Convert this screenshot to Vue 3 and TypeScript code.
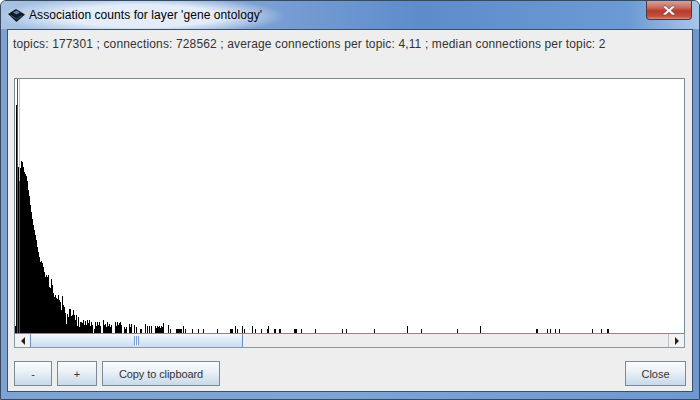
<script setup lang="ts">
const tops: [number, number][] = [
  [15, 326], [16, 105], [18, 167], [20, 168], [21, 161], [22, 162], [23, 167], [24, 172], [25, 174], [26, 176], [27, 181], [28, 190], [29, 196],
  [30, 205], [31, 212], [32, 219], [33, 225], [34, 230], [35, 235], [36, 240], [37, 247], [38, 252], [39, 257], [40, 262], [41, 261],
  [42, 263], [43, 267], [44, 272], [45, 277], [46, 275], [47, 277], [48, 275], [49, 287], [50, 288], [51, 279], [52, 285], [53, 293],
  [54, 297], [55, 295], [56, 298], [57, 299], [58, 295], [59, 300], [60, 302], [61, 310], [62, 296], [63, 305], [64, 307], [65, 313],
  [66, 324], [67, 314], [68, 317], [69, 309], [70, 309], [71, 316], [72, 315], [73, 310], [74, 315], [75, 320], [76, 315], [77, 326],
  [78, 317], [79, 327], [80, 322], [81, 322], [82, 323], [83, 320], [84, 325],
  [85, 321], [86, 325], [87, 320], [88, 323], [89, 320], [90, 326], [91, 322], [92, 325], [94, 329],
  [95, 322], [96, 326], [97, 322], [98, 325], [99, 322], [100, 326], [103, 320], [104, 325], [105, 324], [106, 327], [107, 322],
  [108, 326], [109, 324], [110, 327], [111, 325], [115, 322], [116, 326], [117, 322], [118, 325], [119, 323], [120, 322], [121, 325],
  [124, 327], [125, 329], [126, 327], [129, 324], [130, 327], [131, 324], [134, 325], [136, 327], [140, 329], [141, 329], [145, 324],
  [147, 326], [149, 326], [151, 326], [155, 326], [156, 328], [157, 326], [158, 327], [159, 326], [160, 328], [161, 326],
  [162, 327], [163, 323], [168, 325], [170, 329], [176, 329], [177, 329], [178, 329], [179, 329], [180, 329], [181, 329], [183, 326],
  [185, 329], [192, 329], [198, 329], [203, 329], [217, 329], [230, 329], [231, 329], [232, 329], [235, 326], [237, 329], [242, 326],
  [244, 329], [252, 326], [255, 329], [261, 329], [267, 329], [268, 326], [274, 329], [275, 329], [279, 329], [280, 329], [294, 329],
  [295, 329], [296, 329], [301, 329], [315, 329], [342, 329], [346, 329], [374, 329], [407, 326], [421, 329], [457, 329], [480, 326],
  [536, 329], [537, 329], [547, 329], [550, 329], [555, 329], [559, 329], [592, 329], [601, 329], [607, 329], [608, 329]
]
const bars = tops.map(([x, top]) => ({ x: x - 15, y: top - 79, h: 333 - top }))
</script>

<template>
  <div class="window">
    <header class="titlebar">
      <svg class="app-icon" width="17" height="13" viewBox="0 0 17 13">
        <path d="M0 5 8 0l9 5.500L8.500 13z" fill="#0f1a28" />
        <path d="M5 3.500 8.500 1.500 12 3.500 8.500 5.500z" fill="#5f7f9f" />
        <path d="M3 6.500 8.500 10 14 6.500" fill="none" stroke="#3f5a78" />
      </svg>
      <span class="title">Association counts for layer 'gene ontology'</span>
      <span class="close-x" aria-hidden="true">
        <svg width="16" height="11" viewBox="0 0 16 11">
          <path d="M2 1h3l3 3 3-3h3v1l-4 3.500 4 3.500v1h-3l-3-3-3 3H2V9l4-3.500L2 2z" fill="#f1f1f1" stroke="#6b3a36" stroke-width=".5" />
        </svg>
      </span>
    </header>
    <main class="panel">
      <p class="stats">topics: 177301 ; connections: 728562 ; average connections per topic: 4,11 ; median connections per topic: 2</p>
      <div class="chart">
        <svg class="plot" width="669" height="254" viewBox="0 0 669 254" shape-rendering="crispEdges">
          <rect x="2" y="0" width="1" height="254" fill="#0e6f74" />
          <rect x="4" y="0" width="1" height="102" fill="#86ee8e" />
          <rect x="4" y="102" width="1" height="152" fill="#0f7a25" />
          <rect v-for="b in bars" :key="b.x" :x="b.x" :y="b.y" width="1" :height="b.h" fill="#000" />
        </svg>
        <div class="scrollbar">
          <span class="arrow-btn"><i class="arrow left"></i></span>
          <div class="track">
            <div class="thumb"><span class="grip"></span></div>
          </div>
          <span class="arrow-btn end"><i class="arrow right"></i></span>
        </div>
      </div>
      <footer class="actions">
        <button class="btn small">-</button>
        <button class="btn small plus">+</button>
        <button class="btn copy">Copy to clipboard</button>
        <button class="btn close">Close</button>
      </footer>
    </main>
  </div>
</template>

<style>
html, body { margin: 0; padding: 0; }
</style>

<style scoped>
.window {
  box-sizing: border-box;
  width: 700px;
  height: 400px;
  display: flex;
  flex-direction: column;
  padding: 0 6px 7px;
  border: 1px solid #3a4a5e;
  border-radius: 6px 6px 0 0;
  background: linear-gradient(90deg, #7ea3d2 0%, #7fa5d6 45%, #6e98cf 100%);
  font-family: "Liberation Sans", Arial, sans-serif;
  overflow: hidden;
  position: relative;
}
.titlebar {
  height: 28px;
  flex: none;
  display: flex;
  align-items: center;
  margin: 0 -6px;
  padding-left: 7px;
  background:
    radial-gradient(ellipse 145px 20px at 140px 15px, rgba(232, 240, 250, .95) 55%, rgba(232, 240, 250, 0) 100%),
    linear-gradient(90deg, #a8c2e2 0%, #5e8ccb 60%, #6c9ad4 90%, #a9c6ea 100%);
}
.app-icon { flex: none; margin-right: 4px; }
.title { font-size: 12px; letter-spacing: .07px; color: #000; }
.close-x {
  position: absolute;
  top: 0;
  right: 7px;
  width: 46px;
  height: 19px;
  box-sizing: border-box;
  border: 1px solid #4d3a3f;
  border-top: 0;
  border-radius: 0 0 4px 4px;
  background: linear-gradient(#d9a097 0%, #c96f63 35%, #b93a2c 55%, #c44f3e 85%, #d58b7d 100%);
  display: flex;
  align-items: center;
  justify-content: center;
}
.panel {
  flex: 1;
  min-height: 0;
  box-sizing: border-box;
  display: flex;
  flex-direction: column;
  background: #eeeeee;
  border: 1px solid #3d5068;
  padding: 0 6px 5px 6px;
  color: #333;
}
.stats {
  margin: 0 0 0 -1px;
  height: 48px;
  padding-top: 7px;
  box-sizing: border-box;
  font-size: 12px;
  line-height: 15px;
  letter-spacing: .14px;
  white-space: nowrap;
  color: #333;
}
.chart { display: flex; flex-direction: column; width: 671px; flex: none; }
.plot {
  display: block;
  background: #fff;
  border: 1px solid #7a8a99;
  border-bottom: 0;
}
.scrollbar {
  height: 15px;
  display: flex;
  background: #eeeeee;
  border: 1px solid #8a99a8;
  border-top: 1px solid #6d8cc4;
  box-sizing: border-box;
}
.arrow-btn {
  width: 15px;
  flex: none;
  display: flex;
  align-items: center;
  justify-content: center;
  background: #f2f2f2;
}
.arrow-btn.end { border-left: 1px solid #b8c2cc; }
.arrow { width: 0; height: 0; border-top: 4px solid transparent; border-bottom: 4px solid transparent; }
.arrow.left { border-right: 4px solid #222; }
.arrow.right { border-left: 4px solid #222; }
.track { flex: 1; display: flex; }
.thumb {
  width: 213px;
  box-sizing: border-box;
  border-left: 1px solid #6d8cc4;
  border-right: 1px solid #6d8cc4;
  background: linear-gradient(#f3f8fd, #c9dcf0);
  display: flex;
  align-items: center;
  justify-content: center;
}
.grip {
  width: 5px;
  height: 9px;
  background: repeating-linear-gradient(90deg, #7b9fd0 0 1px, #eef4fa 1px 2px);
}
.actions {
  margin-top: 13px;
  width: 672px;
  display: flex;
  gap: 5px;
}
.btn {
  height: 25px;
  box-sizing: border-box;
  border: 1px solid #7a8a99;
  background: linear-gradient(#fafcfe 0%, #eef3f8 35%, #c8d9ea 100%);
  font-family: "Liberation Sans", Arial, sans-serif;
  font-size: 11px;
  color: #333;
  padding: 0;
}
.small { width: 38px; }
.plus { width: 40px; }
.copy { width: 118px; letter-spacing: -.08px; }
.close { width: 61px; margin-left: auto; font-size: 11px; }
</style>
